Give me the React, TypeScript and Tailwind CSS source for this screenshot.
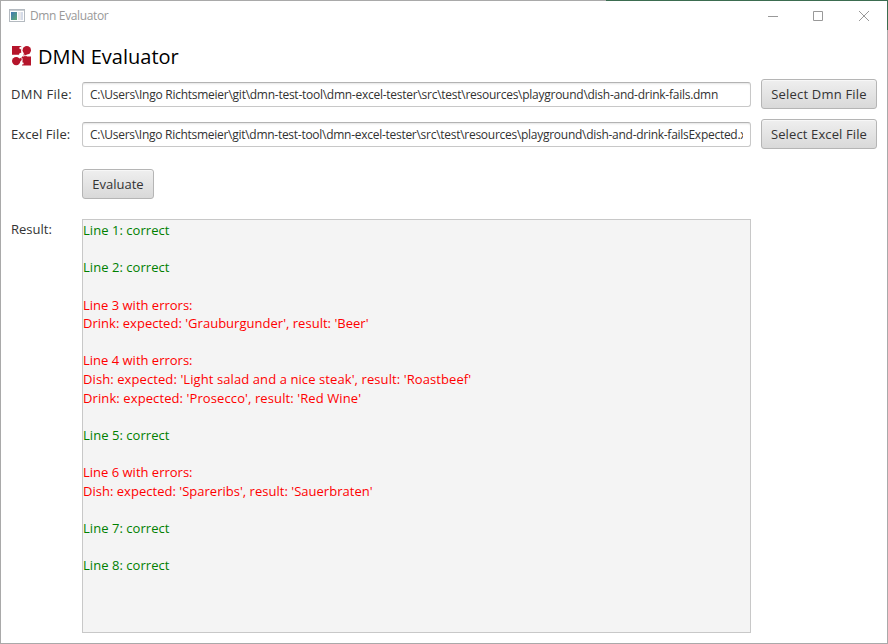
import React from "react";

type Line = { text: string; tone: "ok" | "err" | "gap"; tracking?: string };

const lines: Line[] = [
  { text: "Line 1: correct", tone: "ok", tracking: "tracking-[0.05px]" },
  { text: "", tone: "gap" },
  { text: "Line 2: correct", tone: "ok", tracking: "tracking-[0.05px]" },
  { text: "", tone: "gap" },
  { text: "Line 3 with errors:", tone: "err" },
  { text: "Drink: expected: 'Grauburgunder', result: 'Beer'", tone: "err", tracking: "tracking-[0.02px]" },
  { text: "", tone: "gap" },
  { text: "Line 4 with errors:", tone: "err" },
  { text: "Dish: expected: 'Light salad and a nice steak', result: 'Roastbeef'", tone: "err", tracking: "tracking-[0.09px]" },
  { text: "Drink: expected: 'Prosecco', result: 'Red Wine'", tone: "err", tracking: "tracking-[0.1px]" },
  { text: "", tone: "gap" },
  { text: "Line 5: correct", tone: "ok", tracking: "tracking-[0.05px]" },
  { text: "", tone: "gap" },
  { text: "Line 6 with errors:", tone: "err" },
  { text: "Dish: expected: 'Spareribs', result: 'Sauerbraten'", tone: "err", tracking: "tracking-[0.02px]" },
  { text: "", tone: "gap" },
  { text: "Line 7: correct", tone: "ok", tracking: "tracking-[0.05px]" },
  { text: "", tone: "gap" },
  { text: "Line 8: correct", tone: "ok", tracking: "tracking-[0.05px]" },
];

function Button({ children, className }: { children: React.ReactNode; className: string }) {
  return (
    <button
      className={`flex h-[30px] shrink-0 items-center justify-center whitespace-nowrap rounded-[3px] border border-[#b5b5b5] bg-linear-to-b from-[#efefef] to-[#d9d9d9] pt-[2px] text-[#333] shadow-[inset_0_1px_0_#f7f7f7] ${className}`}
    >
      {children}
    </button>
  );
}

function Field({ value, className }: { value: string; className: string }) {
  return (
    <div className="flex h-[25px] w-[669px] items-center rounded-[3px] border border-[#c8c8c8] border-t-[#b3b3b3] bg-white px-[7px] pt-px shadow-[inset_0_2px_2px_-1px_#e4e4e4]">
      <div className={`w-[655px] overflow-hidden whitespace-nowrap text-[12px] leading-[20px] text-[#323232] ${className}`}>
        {value}
      </div>
    </div>
  );
}

export default function App() {
  return (
    <div className="flex h-[644px] w-[888px] flex-col overflow-hidden bg-white font-['Open_Sans','Noto_Sans',sans-serif] text-[13px] text-[#333]">
      <div className="flex h-px shrink-0">
        <div className="w-[606px] bg-[#a9a9a9]" />
        <div className="flex-1 bg-[#3b6c50]" />
      </div>
      <header className="flex h-[29px] shrink-0 items-center border-x border-l-[#a9a9a9] border-r-[#3b6c50]">
        <svg className="ml-2 h-[14px] w-[16px]" viewBox="0 0 16 14">
          <defs>
            <linearGradient id="pane" x1="0" y1="0" x2="1" y2="1">
              <stop offset="0" stopColor="#3f78b5" />
              <stop offset="1" stopColor="#62ad72" />
            </linearGradient>
          </defs>
          <rect x="0.5" y="0.5" width="15" height="12" fill="#fff" stroke="#b4bac0" />
          <rect x="1" y="1" width="14" height="1" fill="#c9ced3" />
          <rect x="2" y="3" width="6" height="8" fill="url(#pane)" />
          <rect x="9" y="3" width="3" height="8" fill="#e8e8ea" />
          <rect x="12" y="3" width="2" height="8" fill="#d5dbe8" />
        </svg>
        <span className="ml-[5px] text-[12px] tracking-[-0.36px] text-[#999]">Dmn Evaluator</span>
        <svg className="ml-auto mr-[16px] h-[12px] w-[104px]" viewBox="0 0 104 12" fill="none" stroke="#999">
          <path d="M1 6.5h10M46.5 1.5h9v9h-9zM92 1l10 10M102 1l-10 10" />
        </svg>
      </header>
      <div className="flex flex-1 flex-col border-x border-b border-[#a9a9a9]">
        <div className="flex h-[49px] shrink-0 items-center pl-[11px] pt-[4px]">
          <svg className="-mt-px h-[20px] w-[20px]" viewBox="0 0 20 20">
            <path fill="#b5152b" d="M0 0h9.2v8.8H0zM10 10.6h9v8.8h-9z" />
            <g fill="#fff">
              <circle cx="14.8" cy="4.3" r="5.3" />
              <circle cx="4.2" cy="15.1" r="5.3" />
              <circle cx="8.6" cy="2" r="1.2" />
              <circle cx="10.4" cy="17.4" r="1.2" />
              <circle cx="8.8" cy="8.4" r="1.7" />
            </g>
            <g fill="#b5152b">
              <circle cx="14.8" cy="4.3" r="4.2" />
              <circle cx="4.2" cy="15.1" r="4.2" />
              <path d="M12.2 10.7L11 8.2l1.4-1h2l.6 3.5zM7 13l3.4-2.2.4 2.6-2.8 2z" />
            </g>
            <path fill="none" stroke="#fff" strokeWidth="1" d="M10.5 8.2c1.5 1.4 4 1.8 7 .7M9.4 11.5c.8 1 1 2.6.4 5" />
          </svg>
          <h1 className="ml-[6px] text-[20px] text-black">DMN Evaluator</h1>
        </div>
        <main className="grid grid-cols-[71px_669px_116px] gap-x-0 pl-[10px]">
          <span className="flex h-[30px] items-center pt-[2px] tracking-[0.3px]">DMN File:</span>
          <div className="flex h-[30px] items-center">
            <Field
              className="tracking-[-0.26px]"
              value="C:\Users\Ingo Richtsmeier\git\dmn-test-tool\dmn-excel-tester\src\test\resources\playground\dish-and-drink-fails.dmn"
            />
          </div>
          <Button className="ml-[10px] w-[116px] tracking-[0.2px]">Select Dmn File</Button>
          <span className="mt-[10px] flex h-[30px] items-center pt-[2px] tracking-[0.1px]">Excel File:</span>
          <div className="mt-[10px] flex h-[30px] items-center">
            <Field
              className="tracking-[-0.275px]"
              value="C:\Users\Ingo Richtsmeier\git\dmn-test-tool\dmn-excel-tester\src\test\resources\playground\dish-and-drink-failsExpected.x"
            />
          </div>
          <Button className="ml-[10px] mt-[10px] w-[116px] tracking-[0.12px]">Select Excel File</Button>
          <Button className="col-start-2 mt-[20px] w-[72px]">Evaluate</Button>
          <span className="col-start-1 mt-[20px] h-[20px] leading-[20px]">Result:</span>
          <section className="mt-[20px] h-[414px] border border-[#c8c8c8] bg-[#f4f4f4] pt-[1.15px] text-[13px] leading-[18.62px]">
            {lines.map((l, i) => (
              <p
                key={i}
                className={`h-[18.62px] whitespace-pre ${l.tone === "ok" ? "text-[#008000]" : "text-[#ff0000]"} ${l.tracking ?? ""}`}
              >
                {l.text}
              </p>
            ))}
          </section>
        </main>
      </div>
    </div>
  );
}
